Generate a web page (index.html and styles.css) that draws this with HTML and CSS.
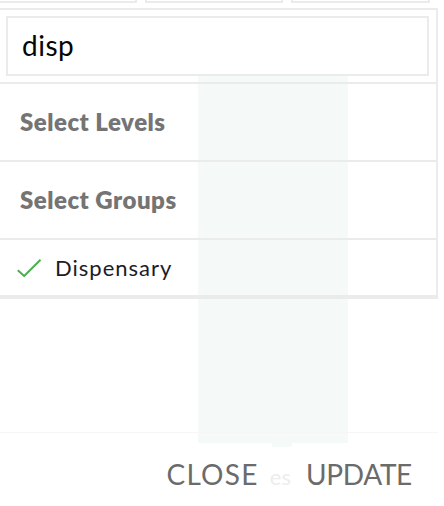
FILE: index.html
```html
<!DOCTYPE html>
<html>
<head>
<meta charset="utf-8">
<link rel="stylesheet" href="styles.css">
</head>
<body>
<div class="bg-column"></div>
<div class="bg-tab"></div>
<div class="page">
  <div class="tabs">
    <div class="tab"></div>
    <div class="tab"></div>
    <div class="tab"></div>
  </div>
  <div class="panel">
    <div class="search">
      <div class="search-input">disp</div>
    </div>
    <div class="row heading">Select Levels</div>
    <div class="row heading">Select Groups</div>
    <div class="row option">
      <svg class="check" width="24" height="18" viewBox="0 0 24 18"><path d="M0.8 11.2 L7.2 17 L23.5 0.8" fill="none" stroke="#4caf50" stroke-width="2"/></svg>
      <span class="option-label">Dispensary</span>
    </div>
  </div>
  <div class="spacer"></div>
  <div class="actions">
    <span class="btn btn-close">CLOSE</span>
    <span class="ghost">es</span>
    <span class="btn btn-update">UPDATE</span>
  </div>
</div>
</body>
</html>
```
FILE: styles.css
```css
html, body {
  margin: 0;
  padding: 0;
}
body {
  width: 444px;
  height: 506px;
  overflow: hidden;
  position: relative;
  background: #ffffff;
  font-family: Lato, "Liberation Sans", sans-serif;
}
.bg-column {
  position: absolute;
  left: 198px;
  top: 76px;
  width: 150px;
  height: 367px;
  background: #f5faf8;
}
.bg-tab {
  position: absolute;
  left: 272px;
  top: 443px;
  width: 20px;
  height: 4px;
  background: #f5faf8;
}
.page {
  position: relative;
}
.tabs {
  display: flex;
  gap: 8px;
  height: 3px;
  width: 432px;
  margin-left: -2px;
}
.tab {
  flex: 1;
  border: 2px solid #ebebeb;
  border-top: 0;
}
.panel {
  margin-top: 5px;
  margin-left: -2px;
  width: 440px;
  box-sizing: border-box;
  border: 2px solid #ebebeb;
  border-bottom-width: 4px;
}
.search {
  padding: 6px 7px 6px 6px;
  border-bottom: 2px solid #ebebeb;
  position: relative;
}
.search-input {
  height: 60px;
  box-sizing: border-box;
  border: 2px solid #ebebeb;
  background: #ffffff;
  display: flex;
  align-items: center;
  padding-left: 14px;
  padding-bottom: 2px;
  font-size: 28px;
  letter-spacing: 0.5px;
  color: #050505;
}
.row {
  display: flex;
  align-items: center;
  padding-left: 20px;
}
.heading {
  border-bottom: 2px solid #ebebeb;
  font-weight: 800;
  font-size: 24px;
  letter-spacing: 0.5px;
  color: #747474;
  padding-bottom: 2px;
  box-sizing: border-box;
  height: 78px;
}
.option {
  height: 55px;
  padding-left: 17px;
  gap: 14px;
}
.check {
  display: block;
}
.option-label {
  font-size: 22px;
  letter-spacing: 1px;
  color: #1b1b29;
}
.spacer {
  height: 133px;
  width: 438px;
  border-bottom: 1px solid #f6f6f6;
}
.actions {
  display: flex;
  justify-content: flex-end;
  align-items: center;
  padding-right: 32px;
  padding-top: 24px;
  font-size: 28px;
  color: #6b6b6b;
}
.btn-close {
  letter-spacing: 1.3px;
}
.btn-update {
  letter-spacing: -0.3px;
}
.ghost {
  font-size: 22px;
  color: #ededed;
  margin: 4px 15px 0 11px;
}
```
